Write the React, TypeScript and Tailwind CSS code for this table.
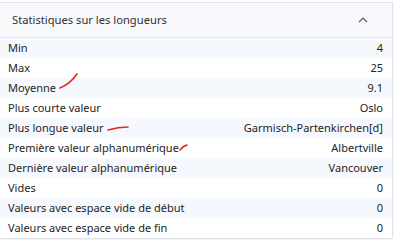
import React from 'react';

const rows: [string, string][] = [
  ['Min', '4'],
  ['Max', '25'],
  ['Moyenne', '9.1'],
  ['Plus courte valeur', 'Oslo'],
  ['Plus longue valeur', 'Garmisch-Partenkirchen[d]'],
  ['Première valeur alphanumérique', 'Albertville'],
  ['Dernière valeur alphanumérique', 'Vancouver'],
  ['Vides', '0'],
  ['Valeurs avec espace vide de début', '0'],
  ['Valeurs avec espace vide de fin', '0'],
];

const App: React.FC = () => {
  return (
    <div className="relative w-[400px] h-[240px] bg-white overflow-hidden" style={{ fontFamily: '"Noto Sans", "Open Sans", sans-serif' }}>
      <div className="mt-[2px] w-[393px] border-t border-r border-b border-[#e1e5eb] rounded-br-[3px] shadow-[0_1px_3px_rgba(0,0,0,0.08)] bg-white">
        <div className="h-[35px] flex items-center justify-between pl-3 pr-[24px] bg-[#f7f9fd] border-b border-[#e1e6ee]">
          <span className="text-[11.2px] text-[#323130]">Statistiques sur les longueurs</span>
          <svg width="10" height="6" viewBox="0 0 10 6" className="text-[#605e5c]">
            <path d="M1 5 L5 1 L9 5" fill="none" stroke="currentColor" strokeWidth="1.2" />
          </svg>
        </div>
        {rows.map(([label, value], i) => (
          <div
            key={label}
            className={`h-[20px] flex items-center justify-between pl-2 pr-[9px] text-[11px] text-[#252423] ${i % 2 === 0 ? 'bg-[#f5f8fc]' : 'bg-white'}`}
          >
            <span>{label}</span>
            <span>{value}</span>
          </div>
        ))}
      </div>
      {/* red annotation marks */}
      <svg className="absolute left-0 top-0 pointer-events-none" width="400" height="240">
        <g fill="none" stroke="#e8231f" strokeWidth="1.6" strokeLinecap="round">
          <path d="M60 88 Q70 84 77 74" />
          <path d="M108 130 Q118 127 128 127" />
          <path d="M180 150 Q183 146 187 145" />
        </g>
      </svg>
    </div>
  );
};

export default App;
